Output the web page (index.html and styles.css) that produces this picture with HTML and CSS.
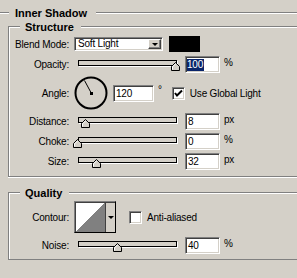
FILE: index.html
```html
<!DOCTYPE html>
<html lang="en">
<head>
    <meta charset="UTF-8" />
    <title>Inner Shadow</title>
    <link rel="stylesheet" href="styles.css">
</head>
<body>
    <div class="panel">
        <!-- outer section title -->
        <div class="title-row outer">
            <div class="rule rule-left"></div>
            <div class="title outer-title">Inner Shadow</div>
            <div class="rule rule-fill"></div>
        </div>

        <!-- Structure group -->
        <div class="group">
            <div class="group-head">
                <div class="corner"></div>
                <div class="title">Structure</div>
                <div class="rule rule-fill"></div>
            </div>
            <div class="group-body structure">
                <div class="row row-blend">
                    <span class="lbl">Blend Mode:</span>
                    <div class="select">
                        <span class="select-text">Soft Light</span>
                        <span class="select-btn"><i class="arrow"></i></span>
                    </div>
                    <span class="swatch"></span>
                </div>

                <div class="row row-slider first">
                    <span class="lbl">Opacity:</span>
                    <div class="track">
                        <svg class="thumb" style="left:92px" width="9" height="9" viewBox="0 0 9 9"><polygon points="4.5,0.5 8.5,4.5 8.5,8.5 0.5,8.5 0.5,4.5" fill="#d4d0c8" stroke="#000"/><polyline points="1.5,7.5 1.5,4.9 4.5,1.9" fill="none" stroke="#fff"/></svg>
                    </div>
                    <div class="field"><span class="sel">100</span></div>
                    <span class="unit">%</span>
                </div>

                <div class="row row-angle">
                    <span class="lbl">Angle:</span>
                    <svg class="dial" width="34" height="34" viewBox="0 0 34 34">
                        <circle cx="17" cy="17" r="15.5" fill="none" stroke="#000" stroke-width="2"/>
                        <line x1="17.5" y1="17.5" x2="10.5" y2="4.5" stroke="#000" stroke-width="1"/>
                        <rect x="16" y="16" width="3" height="3" fill="#000"/>
                    </svg>
                    <div class="field wide">120</div>
                    <span class="deg">°</span>
                    <span class="check on">
                        <svg width="9" height="9" viewBox="0 0 9 9"><path d="M1 4 L3 6.5 L8 1.5" fill="none" stroke="#000" stroke-width="2"/></svg>
                    </span>
                    <span class="check-lbl">Use Global Light</span>
                </div>

                <div class="row row-slider">
                    <span class="lbl">Distance:</span>
                    <div class="track">
                        <svg class="thumb" style="left:2px" width="9" height="9" viewBox="0 0 9 9"><polygon points="4.5,0.5 8.5,4.5 8.5,8.5 0.5,8.5 0.5,4.5" fill="#d4d0c8" stroke="#000"/><polyline points="1.5,7.5 1.5,4.9 4.5,1.9" fill="none" stroke="#fff"/></svg>
                    </div>
                    <div class="field">8</div>
                    <span class="unit">px</span>
                </div>

                <div class="row row-slider">
                    <span class="lbl">Choke:</span>
                    <div class="track">
                        <svg class="thumb" style="left:-6px" width="9" height="9" viewBox="0 0 9 9"><polygon points="4.5,0.5 8.5,4.5 8.5,8.5 0.5,8.5 0.5,4.5" fill="#d4d0c8" stroke="#000"/><polyline points="1.5,7.5 1.5,4.9 4.5,1.9" fill="none" stroke="#fff"/></svg>
                    </div>
                    <div class="field">0</div>
                    <span class="unit">%</span>
                </div>

                <div class="row row-slider">
                    <span class="lbl">Size:</span>
                    <div class="track">
                        <svg class="thumb" style="left:13px" width="9" height="9" viewBox="0 0 9 9"><polygon points="4.5,0.5 8.5,4.5 8.5,8.5 0.5,8.5 0.5,4.5" fill="#d4d0c8" stroke="#000"/><polyline points="1.5,7.5 1.5,4.9 4.5,1.9" fill="none" stroke="#fff"/></svg>
                    </div>
                    <div class="field">32</div>
                    <span class="unit">px</span>
                </div>
            </div>
        </div>

        <!-- Quality group -->
        <div class="group quality-group">
            <div class="group-head">
                <div class="corner"></div>
                <div class="title">Quality</div>
                <div class="rule rule-fill"></div>
            </div>
            <div class="group-body quality">
                <div class="row row-contour">
                    <span class="lbl">Contour:</span>
                    <div class="contour">
                        <span class="curve"></span>
                        <span class="curve-btn"><i class="arrow"></i></span>
                    </div>
                    <span class="check"></span>
                    <span class="check-lbl">Anti-aliased</span>
                </div>

                <div class="row row-slider noise">
                    <span class="lbl">Noise:</span>
                    <div class="track">
                        <svg class="thumb" style="left:34px" width="9" height="9" viewBox="0 0 9 9"><polygon points="4.5,0.5 8.5,4.5 8.5,8.5 0.5,8.5 0.5,4.5" fill="#d4d0c8" stroke="#000"/><polyline points="1.5,7.5 1.5,4.9 4.5,1.9" fill="none" stroke="#fff"/></svg>
                    </div>
                    <div class="field">40</div>
                    <span class="unit">%</span>
                </div>
            </div>
        </div>
    </div>
</body>
</html>
```

FILE: styles.css
```css
/* page */
body {
    margin: 0;
    background: #d4d0c8;
    font-family: "Liberation Sans", Arial, sans-serif;
    font-size: 10px;
    letter-spacing: -0.2px;
    color: #000;
    overflow: hidden;
}

.panel {
    width: 330px;
}

/* etched title rows */
.title-row,
.group-head {
    display: flex;
    align-items: flex-start;
    height: 14px;
}

.title-row.outer {
    margin-top: 6px;
}

.title {
    font-weight: bold;
    font-size: 11px;
    letter-spacing: 0;
    line-height: 14px;
    padding: 0 7px 0 5px;
    white-space: nowrap;
}

.outer-title {
    padding: 0 9px 0 6px;
}

.rule {
    height: 0;
    margin-top: 6px;
    border-top: 1px solid #808080;
    border-bottom: 1px solid #fff;
}

.rule-left {
    width: 9px;
}

.rule-fill {
    flex: 1;
}

/* group boxes */
.group {
    margin-left: 8px;
}

.quality-group {
    margin-top: 9px;
}

.corner {
    box-sizing: border-box;
    width: 12px;
    height: 8px;
    margin-top: 6px;
    border-top: 1px solid #808080;
    border-left: 1px solid #808080;
    box-shadow: inset 1px 1px #fff;
}

.group-body {
    border-left: 1px solid #808080;
    border-bottom: 1px solid #808080;
    box-shadow: inset 1px 0 #fff, 0 1px #fff;
}

.structure {
    padding: 2px 0 6px;
}

.quality {
    padding: 1px 0 5px;
}

/* rows */
.row {
    display: flex;
    align-items: center;
}

.lbl {
    width: 60px;
    margin-right: 5px;
    text-align: right;
    white-space: nowrap;
}

.row-blend {
    height: 16px;
}

.row-slider {
    height: 17px;
    margin-top: 3px;
}

.row-slider.first {
    margin-top: 4px;
}

.row-angle {
    height: 34px;
    margin-top: 3px;
    margin-bottom: 2px;
}

.row-contour {
    height: 32px;
}

.row-slider.noise {
    margin-top: 4px;
}

/* popup menu */
.select {
    box-sizing: border-box;
    display: flex;
    align-items: center;
    width: 89px;
    height: 14px;
    background: #fff;
    border: 1px solid;
    border-color: #808080 #fff #fff #808080;
    box-shadow: inset 1px 1px #404040, inset -1px -1px #d4d0c8;
    padding: 1px;
}

.select-text {
    flex: 1;
    padding-left: 2px;
    line-height: 10px;
}

.select-btn {
    box-sizing: border-box;
    display: flex;
    align-items: center;
    justify-content: center;
    width: 13px;
    height: 10px;
    background: #d4d0c8;
    border: 1px solid;
    border-color: #fff #404040 #404040 #fff;
    box-shadow: inset -1px -1px #808080;
}

.arrow {
    width: 0;
    height: 0;
    border-left: 3px solid transparent;
    border-right: 3px solid transparent;
    border-top: 3px solid #000;
}

.swatch {
    width: 31px;
    height: 16px;
    margin-left: 6px;
    background: #000;
}

/* sliders */
.track {
    position: relative;
    box-sizing: border-box;
    width: 99px;
    height: 6px;
    margin-left: 4px;
    margin-top: -3px;
    border: 1px solid #000;
    box-shadow: 1px 1px #fff;
    background: #d4d0c8;
}

.thumb {
    position: absolute;
    top: 1px;
    display: block;
}

/* number fields */
.field {
    box-sizing: border-box;
    display: flex;
    align-items: center;
    width: 35px;
    height: 17px;
    margin-left: 8px;
    padding-left: 2px;
    background: #fff;
    border: 1px solid;
    border-color: #808080 #fff #fff #808080;
    box-shadow: inset 1px 1px #404040, inset -1px -1px #d4d0c8;
}

.field.wide {
    width: 41px;
    margin-left: 5px;
}

.sel {
    background: #0a246a;
    color: #fff;
    line-height: 12px;
    padding: 0 1px 0 0;
    margin-left: -1px;
}

.unit {
    margin-left: 4px;
    margin-top: -4px;
}

.deg {
    margin-left: 4px;
    margin-top: -8px;
}

/* angle dial */
.dial {
    display: block;
}

/* checkboxes */
.check {
    box-sizing: border-box;
    display: flex;
    align-items: center;
    justify-content: center;
    width: 13px;
    height: 13px;
    margin-left: 10px;
    background: #fff;
    border: 1px solid;
    border-color: #808080 #fff #fff #808080;
    box-shadow: inset 1px 1px #404040, inset -1px -1px #d4d0c8;
}

.row-contour .check {
    margin-left: 13px;
}

.check-lbl {
    margin-left: 5px;
    white-space: nowrap;
}

/* contour picker */
.contour {
    box-sizing: border-box;
    display: flex;
    width: 42px;
    height: 32px;
    border: 1px solid;
    border-color: #808080 #000 #000 #808080;
    box-shadow: inset 1px 1px #404040;
    padding: 1px 0 0 1px;
    background: #d4d0c8;
}

.curve {
    width: 29px;
    background: linear-gradient(to bottom right, #fff 50%, #808080 50%);
}

.curve-btn {
    flex: 1;
    display: flex;
    align-items: center;
    justify-content: center;
    border-left: 1px solid #404040;
}
```
